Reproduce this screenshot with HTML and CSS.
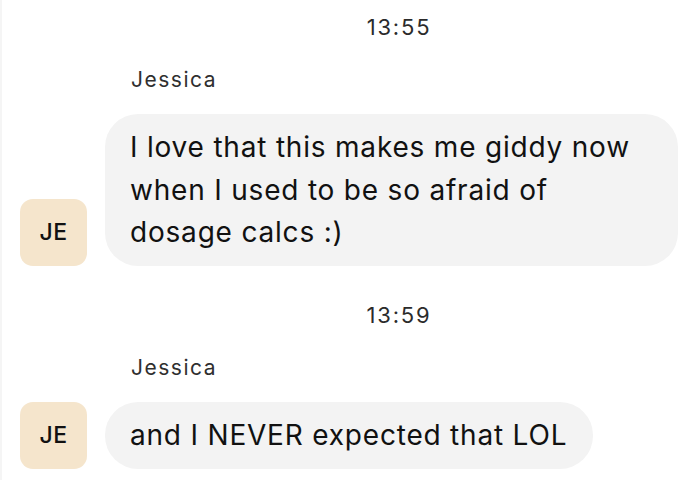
FILE: index.html
```html
<!DOCTYPE html>
<html lang="en">
<head>
  <meta charset="UTF-8" />
  <title>Chat</title>
  <link rel="stylesheet" href="styles.css">
</head>
<body>
  <div class="chat">
    <div class="group">
      <div class="time">13:55</div>
      <div class="name">Jessica</div>
      <div class="msg">
        <div class="avatar">JE</div>
        <div class="bubble">I love that this makes me giddy now when I used to be so afraid of dosage calcs :)</div>
      </div>
    </div>

    <div class="group">
      <div class="time">13:59</div>
      <div class="name">Jessica</div>
      <div class="msg">
        <div class="avatar">JE</div>
        <div class="bubble">and I NEVER expected that LOL</div>
      </div>
    </div>
  </div>
</body>
</html>
```

FILE: styles.css
```css
body {
  margin: 0;
  font-family: Inter, 'Noto Sans', sans-serif;
  background-color: #fff;
  color: #111;
}
.chat {
  min-height: 480px;
  box-sizing: border-box;
  padding: 12px 0 0 18px;
  border-left: 2px solid #f5f5f5;
}
.group + .group {
  margin-top: 34px;
}
.time {
  padding-left: 78px;
  text-align: center;
  font-size: 22px;
  line-height: 30px;
  letter-spacing: 1.8px;
  color: #2b2b2b;
}
.name {
  margin: 24px 0 20px 111px;
  font-size: 21px;
  line-height: 28px;
  letter-spacing: 1.5px;
  color: #2f2f2f;
}
.msg {
  display: flex;
  align-items: flex-end;
  gap: 18px;
}
.avatar {
  flex: none;
  width: 67px;
  height: 67px;
  border-radius: 13px;
  background-color: #f5e5cc;
  display: flex;
  justify-content: center;
  align-items: center;
  font-size: 23px;
  font-weight: 500;
  letter-spacing: 0.5px;
  color: #111;
}
.bubble {
  box-sizing: border-box;
  max-width: 573px;
  padding: 12px 26px 12px 25px;
  border-radius: 33px;
  background-color: #f3f3f3;
  font-size: 28px;
  line-height: 42.5px;
  letter-spacing: 0.8px;
}
```
